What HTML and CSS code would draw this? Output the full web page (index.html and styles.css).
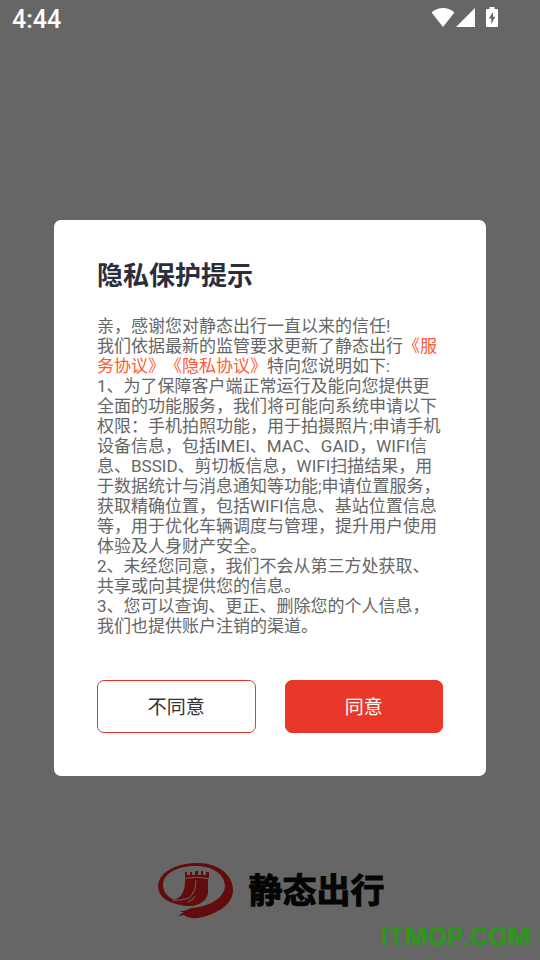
FILE: index.html
```
<!DOCTYPE html>
<html lang="zh-CN">
<head>
<meta charset="utf-8">
<meta name="viewport" content="width=device-width, initial-scale=1">
<title>静态出行</title>
<link rel="stylesheet" href="styles.css">
</head>
<body>
<div class="screen">
  <header class="status">
    <time class="clock">4:44</time>
    <div class="status-icons">
      <svg class="wifi" width="24" height="20" viewBox="0 0 24 20" aria-hidden="true"><path d="M12 20 0.600 5.600C3.800 2.600 7.600 1 12 1s8.200 1.600 11.400 4.600z"/></svg>
      <svg class="signal" width="20" height="20" viewBox="0 0 20 20" aria-hidden="true"><path d="M0 20 19 1v19z"/></svg>
      <svg class="battery" width="12" height="20" viewBox="0 0 12 20" aria-hidden="true"><path fill-rule="evenodd" d="M3.500 0h5v2H11q1 0 1 1v16q0 1-1 1H1q-1 0-1-1V3q0-1 1-1h2.500zM7 5 2.800 11.500H5.300V17L9.300 9.800H7z"/></svg>
    </div>
  </header>
  <footer class="brand">
    <svg class="brand-mark" width="76" height="58" viewBox="0 0 76 58" aria-hidden="true">
      <path fill-rule="evenodd" d="M37 1C60 0 75 13 75 28C75 41 62 50 48 54C40 57 31 57 26 53L20 54L26 50L21 50C25 48 29 49 33 46C50 45 66 37 67 24C66 11 54 4 37 4C17 4 5 13 5 23C5 33 14 39 27 40L31 40L44 40C39 44 30 45 23 43C9 41 0 34 0 24C1 10 17 2 37 1Z"/>
      <path d="M27 10h2v3h3v-3h2v3h3v-4h3v4h3v-4h2v4h3v-3h3v6l-1 2L50 31C49 38 43 43 32 44C25 44 18 42 12 38C23 38 27 30 27 19L27 16Z"/>
      <path class="mark-line" d="M26 16.500Q39 14 51 16.500M38 18L37 27Q34 34 31 36Q24 39 14 38M37 34L34 38L30 40"/>
    </svg>
    <span class="brand-name">静态出行</span>
  </footer>
  <span class="watermark">ITMOP.COM</span>
</div>
<div class="overlay">
  <section class="dialog" role="dialog" aria-modal="true" aria-labelledby="dialog-title">
    <h1 class="title" id="dialog-title">隐私保护提示</h1>
    <div class="copy">
      <p>亲，感谢您对静态出行一直以来的信任!</p>
      <p>我们依据最新的监管要求更新了静态出行<a href="#service">《服务协议》</a><a href="#privacy">《隐私协议》</a>特向您说明如下:</p>
      <p>1、为了保障客户端正常运行及能向您提供更全面的功能服务，我们将可能向系统申请以下权限：手机拍照功能，用于拍摄照片;申请手机设备信息，包括IMEI、MAC、GAID，WIFI信息、BSSID、剪切板信息，WIFI扫描结果，用于数据统计与消息通知等功能;申请位置服务，获取精确位置，包括WIFI信息、基站位置信息等，用于优化车辆调度与管理，提升用户使用体验及人身财产安全。</p>
      <p>2、未经您同意，我们不会从第三方处获取、共享或向其提供您的信息。</p>
      <p>3、您可以查询、更正、删除您的个人信息，我们也提供账户注销的渠道。</p>
    </div>
    <div class="actions">
      <button class="btn" type="button">不同意</button>
      <button class="btn btn-primary" type="button">同意</button>
    </div>
  </section>
</div>
</body>
</html>
```
FILE: styles.css
```
* {
  box-sizing: border-box;
}

body {
  margin: 0;
  background: #666;
  font-family: Roboto, "Noto Sans CJK SC", sans-serif;
  text-spacing-trim: space-all;
}

.screen {
  position: relative;
  display: flex;
  flex-direction: column;
  justify-content: space-between;
  min-height: 100vh;
}

.status {
  display: flex;
  align-items: flex-start;
  justify-content: space-between;
  padding: 0 42px 0 12px;
  color: #fff;
}

.clock {
  font-size: 25px;
  font-weight: 500;
  line-height: 40px;
}

.status-icons {
  display: flex;
  align-items: center;
  padding-top: 7px;
  fill: currentColor;
}

.signal {
  margin-left: 1px;
}

.battery {
  margin-left: 10px;
}

.brand {
  display: flex;
  align-items: center;
  justify-content: center;
  gap: 15px;
  padding: 0 0 40px 2px;
}

.brand-mark {
  fill: #630c0e;
}

.mark-line {
  fill: none;
  stroke: #666;
  stroke-width: 1;
}

.brand-name {
  color: #050505;
  font-size: 34px;
  font-weight: 700;
  line-height: 56px;
  -webkit-text-stroke: 1px #050505;
}

.watermark {
  position: absolute;
  right: 9px;
  bottom: 8px;
  color: #2a9a16;
  font-family: Inter, sans-serif;
  font-size: 25px;
  font-weight: 700;
  line-height: 30px;
}

.overlay {
  position: fixed;
  inset: 0;
  display: grid;
  place-items: center;
  padding-top: 36px;
}

.dialog {
  width: 80%;
  padding: 38px 43px 43px;
  border-radius: 7px;
  background: #fff;
}

.title {
  margin: 0 0 22px;
  color: #2b2d3b;
  font-size: 26px;
  font-weight: 700;
  line-height: 36px;
}

.copy {
  color: #666;
  font-size: 17px;
  line-height: 20px;
}

.copy p {
  margin: 0;
}

.copy a {
  color: #ff5a35;
  text-decoration: none;
}

.actions {
  display: grid;
  grid-template-columns: 1fr 1fr;
  gap: 29px;
  margin-top: 44px;
}

.btn {
  height: 53px;
  padding: 0 0 2px;
  border: 1px solid #e93829;
  border-radius: 7px;
  background: #fff;
  color: #333;
  font: inherit;
  font-size: 19px;
}

.btn-primary {
  background: #e93829;
  color: #fff;
}
```
